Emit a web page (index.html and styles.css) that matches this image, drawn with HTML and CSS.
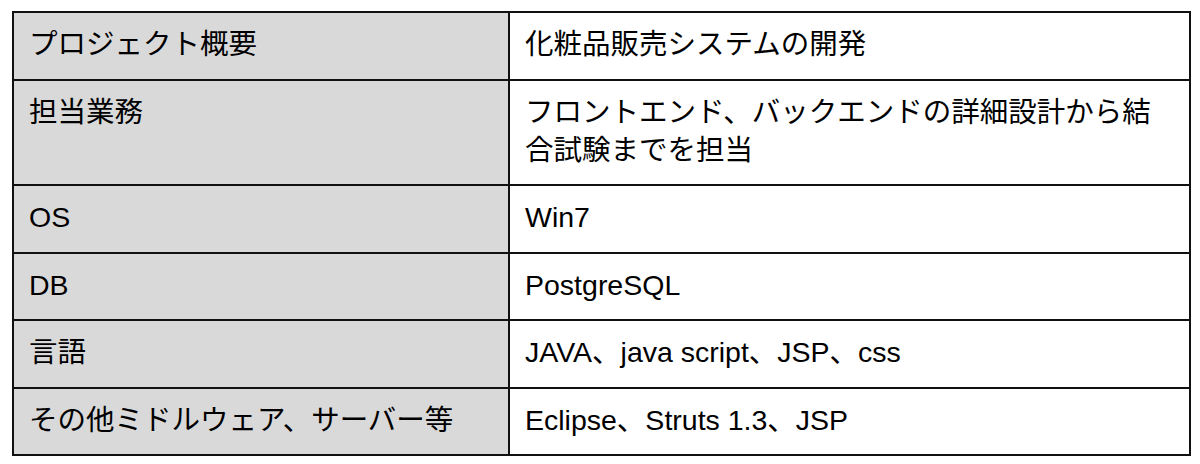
FILE: index.html
```html
<!DOCTYPE html>
<html lang="ja">
<head>
<meta charset="utf-8">
<link rel="stylesheet" href="styles.css">
</head>
<body>
<table class="spec">
  <colgroup><col class="col-label"><col class="col-value"></colgroup>
  <tbody>
    <tr><th>プロジェクト概要</th><td>化粧品販売システムの開発</td></tr>
    <tr><th>担当業務</th><td>フロントエンド、バックエンドの詳細設計から結合試験までを担当</td></tr>
    <tr><th>OS</th><td>Win7</td></tr>
    <tr><th>DB</th><td>PostgreSQL</td></tr>
    <tr><th>言語</th><td>JAVA、java script、JSP、css</td></tr>
    <tr><th>その他ミドルウェア、サーバー等</th><td>Eclipse、Struts 1.3、JSP</td></tr>
  </tbody>
</table>
</body>
</html>
```
FILE: styles.css
```css
html, body {
  margin: 0;
  background: #ffffff;
}
body {
  padding: 11px 0 0 12px;
  font-family: "Liberation Sans", "Noto Sans CJK JP", sans-serif;
  color: #000;
}
.spec {
  border-collapse: collapse;
  table-layout: fixed;
  width: 1177px;
}
.col-label { width: 496px; }
.col-value { width: 681px; }
.spec th,
.spec td {
  border: 2px solid #111;
  font-size: 28.5px;
  line-height: 38px;
  font-weight: normal;
  text-align: left;
  vertical-align: top;
  padding: 12px 16px 15.5px 15px;
}
.spec th {
  background: #d9d9d9;
}
.spec td {
  background: #ffffff;
}
```
